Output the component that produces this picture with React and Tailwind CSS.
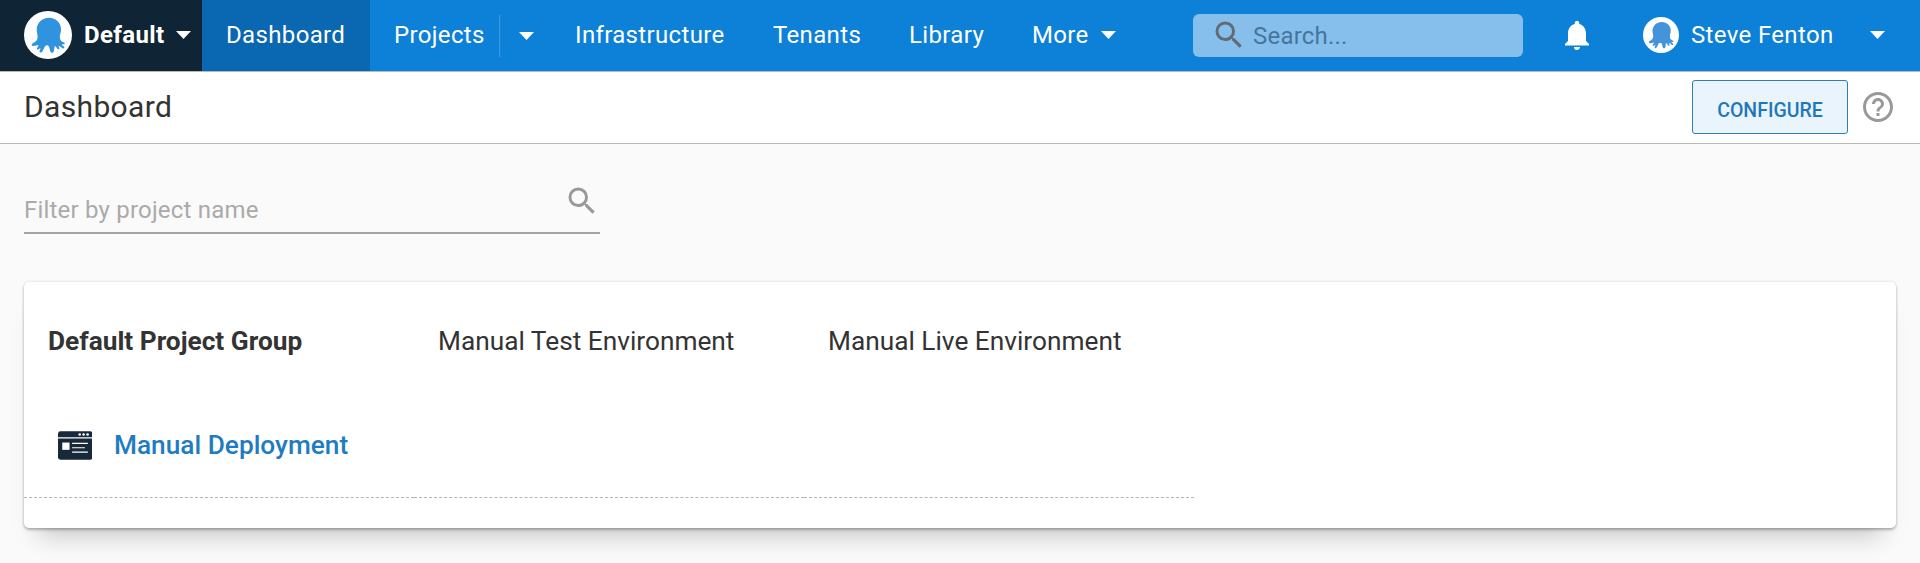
import { MdSearch, MdNotifications, MdHelpOutline } from "react-icons/md";

function Octopus({ className, color = "#2f93e0" }) {
  return (
    <svg viewBox="0 0 48 48" className={className}>
      <circle cx="24" cy="24" r="24" fill="#fff" />
      <path
        fill={color}
        d="M25 6.800C18 6.800 12.700 12 12.700 18.600C12.700 21.500 13.600 23.300 13.600 25.800C13.600 29.500 11.500 31 8.500 32.400C7.200 33.100 7.500 34.800 9 34.900C11 35 12.600 34 14.300 33.900C14.800 35.600 12.200 37 13 38.300C13.900 39.200 15.300 37.700 16.300 36.900C16.700 38.400 15.300 39.400 15.500 40.800C15.800 41.900 17.200 41.800 17.900 40.900C19.400 39 19.900 36.700 21.200 34.900C22.600 33.900 24.200 34 24.900 35.400C26 37.500 25.600 39.500 26.800 41.200C27.700 42.200 29.200 42 29.700 40.800C30.400 38.900 29.900 36.800 30.900 34.900C32.300 34.800 32.600 37.600 34 38.200C35.300 38.600 35.800 37.700 35.200 36.600C34.900 35.900 34.600 35.500 34.900 34.800C36.300 35 37.400 37 39 37.400C40.500 37.500 40.800 36.200 39.800 35.300C38.900 34.600 38 34.300 38 33.400C39.100 33.200 40.300 33.700 40.700 32.800C41 31.900 40.300 31.500 39.400 31.200C36.900 30.300 35.800 28.600 35.800 25.900C35.800 23.400 37 21.500 37 18.400C37 12 32 6.800 25 6.800z"
      />
    </svg>
  );
}

function Caret() {
  return (
    <svg viewBox="0 0 15 8" className="h-2 w-[15px] shrink-0 fill-white">
      <path d="M0 0h15L7.500 8z" />
    </svg>
  );
}

function ProjectIcon() {
  return (
    <svg viewBox="0 0 35 29" className="h-[29px] w-[34.5px] shrink-0">
      <rect width="35" height="29" rx="2.500" fill="#18293a" />
      <path d="M0 6.800h35" stroke="#fff" strokeWidth="1.200" />
      <g fill="#fff">
        <circle cx="22" cy="3.400" r="1.300" />
        <circle cx="26" cy="3.400" r="1.300" />
        <circle cx="30" cy="3.400" r="1.300" />
        <rect x="4.300" y="11.500" width="7.400" height="7.400" />
      </g>
      <path d="M14.300 12.400h16M14.300 16.800h13M14.300 21.300h16" stroke="#fff" strokeWidth="1.200" />
    </svg>
  );
}

function NavBar() {
  return (
    <header className="flex h-[71px] bg-[#0d80d8] text-2xl text-white">
      <div className="flex w-[202px] items-center bg-[#0f2535] pb-0.5 pl-6">
        <Octopus className="size-12 shrink-0" />
        <span className="ml-3 w-[92px] font-bold">Default</span>
        <Caret />
      </div>
      <a className="flex w-[168px] items-center bg-[#0a67b1] pb-0.5 pl-6">Dashboard</a>
      <a className="flex w-[129px] items-center pb-0.5 pl-6">Projects</a>
      <div className="flex h-[42px] w-[52px] items-center self-center border-l border-[#3d9ae1] pl-[19px]">
        <Caret />
      </div>
      <nav className="flex items-center pb-0.5 pl-6">
        <a className="w-[198px]">Infrastructure</a>
        <a className="w-[136px]">Tenants</a>
        <a className="w-[123px]">Library</a>
        <a className="flex w-[161px] items-center">
          <span className="w-[69px]">More</span>
          <Caret />
        </a>
      </nav>
      <div className="flex h-[43px] w-[330px] items-center self-center rounded-md bg-[#87bfec] pl-[18px]">
        <MdSearch className="-mt-0.5 size-9 text-[#616b75]" />
        <span className="ml-1.5 tracking-[0.2px] text-[#46759c]">Search...</span>
      </div>
      <div className="flex items-center pb-0.5 pl-9">
        <MdNotifications className="size-9" />
        <Octopus className="ml-12 size-9" color="#4394d8" />
        <span className="ml-3 w-[179px]">Steve Fenton</span>
        <Caret />
      </div>
    </header>
  );
}

export default function App() {
  return (
    <div className="h-[563px] overflow-hidden bg-[#fafafa] font-[Roboto,sans-serif] tracking-[0.35px] text-[#333]">
      <NavBar />
      <div className="flex h-[73px] items-center justify-between border-y border-[#b9b9b9] bg-white px-6 pb-0.5">
        <h1 className="text-[30px]">Dashboard</h1>
        <div className="flex items-center">
          <button className="h-[54px] w-[156px] rounded-[3px] border border-[#2f7fae] bg-[#e9f4fc] pt-2 text-[19.500px] font-medium tracking-normal text-[#1f77b8]">
            CONFIGURE
          </button>
          <MdHelpOutline className="ml-3 size-9 text-[#999]" />
        </div>
      </div>
      <main className="px-6 pt-[39px]">
        <div className="flex h-[51px] w-[576px] items-start justify-between border-b-2 border-[#a3a3a3]">
          <span className="pt-[11px] text-2xl tracking-[0.2px] text-[#aaa]">Filter by project name</span>
          <MdSearch className="size-9 text-[#999]" />
        </div>
        <section className="mt-12 h-[246px] rounded-[5px] bg-white tracking-normal shadow-[0_0_3px_rgba(0,0,0,0.12),0_2px_3px_rgba(0,0,0,0.25),0_22px_24px_-14px_rgba(0,0,0,0.2)]">
          <div className="grid h-[118px] w-[1170px] grid-cols-3 items-center pt-0.5 text-[26.250px]">
            <span className="pl-6 font-bold">Default Project Group</span>
            <span className="pl-6">Manual Test Environment</span>
            <span className="pl-6">Manual Live Environment</span>
          </div>
          <div className="grid h-[98px] w-[1170px] grid-cols-3">
            <div className="flex items-center border-b border-dashed border-[#b5b5b5] pb-[7px] pl-[33.5px] text-[26.250px]">
              <ProjectIcon />
              <a className="ml-[22px] pt-0.5 font-medium text-[#1f7cc0]">Manual Deployment</a>
            </div>
            <div className="border-b border-dashed border-[#b5b5b5]" />
            <div className="border-b border-dashed border-[#b5b5b5]" />
          </div>
        </section>
      </main>
    </div>
  );
}
